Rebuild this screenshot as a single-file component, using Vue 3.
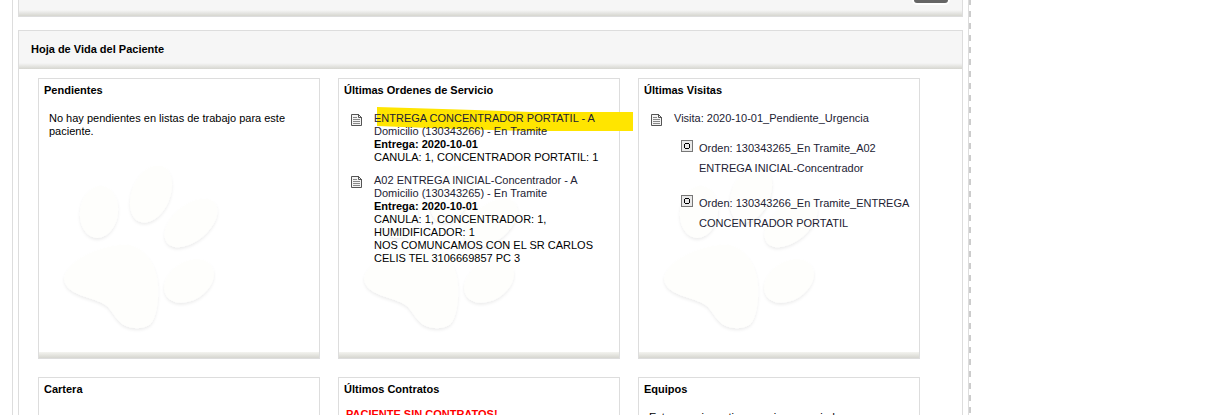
<script setup>
const servicios = [
  {
    titulo: 'ENTREGA CONCENTRADOR PORTATIL - A Domicilio (130343266) - En Tramite',
    fecha: '2020-10-01',
    detalle: ['CANULA: 1, CONCENTRADOR PORTATIL: 1'],
    marcado: true
  },
  {
    titulo: 'A02 ENTREGA INICIAL-Concentrador - A Domicilio (130343265) - En Tramite',
    fecha: '2020-10-01',
    detalle: [
      'CANULA: 1, CONCENTRADOR: 1, HUMIDIFICADOR: 1',
      'NOS COMUNCAMOS CON EL SR CARLOS CELIS TEL 3106669857 PC 3'
    ],
    marcado: false
  }
]

const visita = {
  titulo: 'Visita: 2020-10-01_Pendiente_Urgencia',
  ordenes: [
    'Orden: 130343265_En Tramite_A02 ENTREGA INICIAL-Concentrador',
    'Orden: 130343266_En Tramite_ENTREGA CONCENTRADOR PORTATIL'
  ]
}
</script>

<template>
  <!-- simbolos compartidos -->
  <svg class="defs" width="0" height="0" aria-hidden="true">
    <defs>
      <filter id="relieve" x="-20%" y="-20%" width="150%" height="150%">
        <feDropShadow dx="0" dy="2" stdDeviation="1.5" flood-color="#000" flood-opacity="0.07" />
      </filter>
      <symbol id="huella" viewBox="0 0 160 170">
        <g fill="#fefefc" filter="url(#relieve)">
          <ellipse cx="38" cy="46" rx="19" ry="26" transform="rotate(8 38 46)" />
          <ellipse cx="90" cy="28" rx="19" ry="30" transform="rotate(23 90 28)" />
          <ellipse cx="130" cy="57" rx="18" ry="31" transform="rotate(50 130 57)" />
          <ellipse cx="128" cy="115" rx="19" ry="27" transform="rotate(57 128 115)" />
          <path d="M3 113C6 96 32 82 60 79C82 77 96 98 97 120C98 135 95 150 91 156C86 164 68 164 60 157C54 152 52 146 47 141C36 130 6 132 3 113Z" />
        </g>
      </symbol>
      <symbol id="hoja" viewBox="0 0 12 12">
        <path d="M.5 .5H7.500L10.500 3.500V11.500H.5Z" fill="#f4f4f4" stroke="#555" />
        <path d="M7.500 0V3.500H11" fill="none" stroke="#555" />
        <path d="M2 3.500H6M2 5.500H9M2 7.500H9M2 9.500H9" stroke="#888" />
      </symbol>
      <symbol id="orden" viewBox="0 0 12 12">
        <rect x=".5" y=".5" width="11" height="11" fill="#e9e9e9" stroke="#777" />
        <path d="M4 3.500H8M4 8.500H8M3.500 4V8M8.500 4V8" stroke="#000" fill="none" />
      </symbol>
    </defs>
  </svg>

  <main class="pagina">
    <section class="panel panel-superior">
      <button class="boton" type="button" aria-label="Guardar"></button>
    </section>

    <section class="panel">
      <h1 class="cabecera">Hoja de Vida del Paciente</h1>
      <div class="rejilla">
        <article class="tarjeta">
          <svg class="huella" aria-hidden="true"><use href="#huella" /></svg>
          <h2>Pendientes</h2>
          <p class="mensaje">No hay pendientes en listas de trabajo para este paciente.</p>
        </article>

        <article class="tarjeta">
          <svg class="huella" aria-hidden="true"><use href="#huella" /></svg>
          <h2>Últimas Ordenes de Servicio</h2>
          <ul class="lista">
            <li v-for="s in servicios" :key="s.titulo">
              <svg v-if="s.marcado" class="resaltado" viewBox="0 0 258 26" aria-hidden="true">
                <path d="M2 0L100 3L157 5H258V24H150L80 22L2 19Z" fill="#ffe500" />
              </svg>
              <svg class="icono" aria-hidden="true"><use href="#hoja" /></svg>
              <div class="texto">
                <a href="#">{{ s.titulo }}</a>
                <strong>Entrega: {{ s.fecha }}</strong>
                <p v-for="d in s.detalle" :key="d">{{ d }}</p>
              </div>
            </li>
          </ul>
        </article>

        <article class="tarjeta">
          <svg class="huella" aria-hidden="true"><use href="#huella" /></svg>
          <h2>Últimas Visitas</h2>
          <ul class="lista">
            <li>
              <svg class="icono" aria-hidden="true"><use href="#hoja" /></svg>
              <a href="#">{{ visita.titulo }}</a>
            </li>
          </ul>
          <ul class="ordenes">
            <li v-for="o in visita.ordenes" :key="o">
              <svg class="icono" aria-hidden="true"><use href="#orden" /></svg>
              <a href="#">{{ o }}</a>
            </li>
          </ul>
        </article>

        <article class="tarjeta">
          <h2>Cartera</h2>
        </article>

        <article class="tarjeta">
          <h2>Últimos Contratos</h2>
          <p class="alerta">PACIENTE SIN CONTRATOS!</p>
        </article>

        <article class="tarjeta">
          <h2>Equipos</h2>
          <p class="mensaje">Este usuario no tiene equipos asociados</p>
        </article>
      </div>
    </section>
  </main>
</template>

<style>
html {
  height: 100%;
  overflow: hidden;
}

body {
  margin: 0;
  height: 100%;
  overflow: hidden;
  background: #fff;
}
</style>

<style scoped>
.defs {
  position: absolute;
}

.pagina {
  box-sizing: border-box;
  max-width: 959px;
  margin-left: 12px;
  padding: 0 8px 0 5px;
  border-left: 1px solid #ddd;
  background:
    repeating-linear-gradient(#ccc 0 5px, #fff 5px 11px, #ccc 11px 12px) right top / 2px 100% no-repeat,
    linear-gradient(#ddd, #ddd) right 2px top / 1px 100% no-repeat;
  font-family: "Liberation Sans", Arial, sans-serif;
  font-size: 11px;
  line-height: 13px;
  color: #000;
}

.panel {
  border: 1px solid #ddd;
}

.panel-superior {
  box-sizing: border-box;
  height: 17px;
  margin-bottom: 13px;
  padding-right: 14px;
  border-top: 0;
  display: flex;
  justify-content: flex-end;
  align-items: flex-start;
  background: linear-gradient(#f6f6f6, #d6d6d0) bottom / 100% 6px no-repeat #f6f6f6;
}

.boton {
  width: 34px;
  height: 3px;
  padding: 0;
  border: 0;
  border-radius: 0 0 3px 3px;
  background: #666;
  box-shadow: 0 0 0 2px #fff;
}

.cabecera {
  margin: 0;
  padding: 12px 12px 13px;
  background: linear-gradient(#f6f6f6, #d6d6d0) bottom / 100% 6px no-repeat #f6f6f6;
  font-size: 11px;
  line-height: 13px;
}

.rejilla {
  display: grid;
  grid-template-columns: repeat(3, minmax(0, 282px));
  gap: 18px;
  padding: 9px 19px;
}

.tarjeta {
  box-sizing: border-box;
  position: relative;
  min-height: 281px;
  padding: 5px;
  border: 1px solid #ddd;
  background: linear-gradient(#f4f4f0, #d6d6d0) bottom / 100% 6px no-repeat #fff;
}

h2 {
  position: relative;
  margin: 0;
  font-size: 11px;
  line-height: 13px;
}

.huella {
  position: absolute;
  left: 22px;
  top: 87px;
  width: 160px;
  height: 170px;
  overflow: visible;
}

.mensaje {
  position: relative;
  margin: 15px 20px 0 5px;
}

.alerta {
  margin: 12px 0 0 2px;
  font-weight: bold;
  color: #f00;
}

ul {
  position: relative;
  margin: 0;
  padding: 0;
  list-style: none;
}

li {
  position: relative;
  display: flex;
}

a {
  color: #223;
  text-decoration: none;
}

.lista {
  margin-top: 15px;
  padding: 0 15px 0 7px;
}

.lista li {
  gap: 11px;
  margin-bottom: 10px;
}

.icono {
  position: relative;
  flex: none;
  width: 12px;
  height: 12px;
  margin-top: 2px;
}

.texto {
  position: relative;
}

.texto a,
.texto strong {
  display: block;
}

.texto p {
  margin: 0;
}

.resaltado {
  position: absolute;
  left: 24px;
  top: -5px;
  width: 258px;
  height: 26px;
  z-index: 0;
}

.ordenes {
  padding: 2px 0 0 37px;
}

.ordenes li {
  gap: 6px;
  margin-bottom: 15px;
  line-height: 20px;
}
</style>
